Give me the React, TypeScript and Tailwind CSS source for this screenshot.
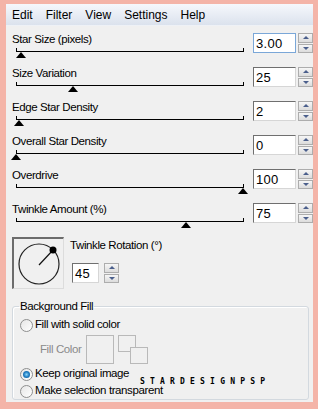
import React from 'react';

type SliderRow = { label: string; value: string; pos: number; focused?: boolean };

const rows: SliderRow[] = [
  { label: 'Star Size (pixels)', value: '3.00', pos: 5, focused: true },
  { label: 'Size Variation', value: '25', pos: 57 },
  { label: 'Edge Star Density', value: '2', pos: 3 },
  { label: 'Overall Star Density', value: '0', pos: 0 },
  { label: 'Overdrive', value: '100', pos: 227 },
  { label: 'Twinkle Amount (%)', value: '75', pos: 170 },
];

const menu = ['Edit', 'Filter', 'View', 'Settings', 'Help'];

const Spinner = () => (
  <div className="flex flex-col w-[15px] h-[20px] gap-px">
    <div className="flex-1 border border-[#adadad] bg-linear-to-b from-[#f6f6f6] to-[#dcdcdc] flex items-center justify-center">
      <div className="w-0 h-0 border-x-[3px] border-x-transparent border-b-[3px] border-b-[#4b5f8c]" />
    </div>
    <div className="flex-1 border border-[#adadad] bg-linear-to-b from-[#f6f6f6] to-[#dcdcdc] flex items-center justify-center">
      <div className="w-0 h-0 border-x-[3px] border-x-transparent border-t-[3px] border-t-[#4b5f8c]" />
    </div>
  </div>
);

const NumberBox = ({ value, width, focused }: { value: string; width: string; focused?: boolean }) => (
  <div
    className={`${width} h-[20px] bg-white flex items-center pl-[2px] text-[13px] tracking-[0.3px] leading-none text-black ${
      focused
        ? 'border border-[#7aa7d8]'
        : 'border-t border-l border-[#6f6f6f] border-r-[#d6d6d6] border-b-[#d6d6d6] border-r border-b'
    }`}
  >
    {value}
  </div>
);

const Radio = ({ checked }: { checked?: boolean }) => (
  <div className="w-[13px] h-[13px] rounded-full border border-[#8e8f8f] bg-linear-to-br from-[#e6e6e6] to-[#ffffff] flex items-center justify-center">
    {checked && (
      <div className="w-[7px] h-[7px] rounded-full bg-radial from-[#8ad7f7] via-[#1f7fc4] to-[#0b4f8a]" />
    )}
  </div>
);

export default function App() {
  return (
    <div
      className="relative w-[318px] h-[409px] bg-[#f4b4a8] pt-[4px] pl-[6px] pr-[5px] pb-[7px] text-[11.5px] tracking-[-0.4px] text-black"
      style={{ fontFamily: '"Liberation Sans", Arial, sans-serif' }}
    >
      <div className="h-full bg-[#f0f0f0] flex flex-col">
        {/* menu bar */}
        <div className="h-[22px] bg-linear-to-b from-[#f6f8fc] to-[#dbe2ed] border-b border-[#eef1f6] flex items-center pl-[6px] gap-[13px] text-[12px] tracking-normal">
          {menu.map((m) => (
            <span key={m}>{m}</span>
          ))}
        </div>

        {/* sliders */}
        <div className="pt-[7px] flex flex-col">
          {rows.map((r) => (
            <div key={r.label} className="h-[34px] flex">
              <div className="w-[243px] pl-[6px]">
                <div className="leading-[12px]">{r.label}</div>
                <div className="relative ml-[4px] w-[228px] mt-[3px] h-[11px]">
                  <div className="h-[4px] border-l border-r border-b border-black" />
                  <div
                    className="absolute top-[4px] w-0 h-0 border-x-[5px] border-x-transparent border-b-[6px] border-b-black"
                    style={{ left: r.pos - 5 }}
                  />
                </div>
              </div>
              <div className="ml-[6px] flex gap-[2px]">
                <NumberBox value={r.value} width="w-[43px]" focused={r.focused} />
                <Spinner />
              </div>
            </div>
          ))}
        </div>

        {/* rotation */}
        <div className="flex pl-[6px]">
          <div className="w-[52px] h-[52px] border-t-2 border-l-2 border-[#6c6c6c] border-r border-b border-r-[#dcdcdc] border-b-[#dcdcdc]">
            <svg width="49" height="49" viewBox="0 0 49 49">
              <circle cx="25" cy="25" r="20" fill="none" stroke="#222" strokeWidth="1.2" />
              <line x1="25" y1="26" x2="39" y2="11" stroke="#111" strokeWidth="1.2" />
              <circle cx="39" cy="11" r="3.5" fill="#000" />
            </svg>
          </div>
          <div className="ml-[6px] pt-[2px]">
            <div className="leading-[12px]">Twinkle Rotation (°)</div>
            <div className="flex gap-[5px] ml-[2px] mt-[12px]">
              <NumberBox value="45" width="w-[27px]" />
              <Spinner />
            </div>
          </div>
        </div>

        {/* background fill */}
        <fieldset className="mt-[10px] ml-[6px] mr-[4px] border border-[#d3d9df] rounded-[3px] pl-[7px] pb-0 shadow-[inset_1px_1px_0_#ffffff]">
          <legend className="px-px -ml-px leading-[14px]">Background Fill</legend>
          <div className="mt-[4px] h-[16px] flex items-center gap-[2px]">
            <Radio />
            <span>Fill with solid color</span>
          </div>
          <div className="mt-[2px] h-[29px] flex items-center pl-[20px]">
            <span className="text-[#8a8a8a] w-[46px]">Fill Color</span>
            <div className="w-[28px] h-[29px] border border-[#b9b9b9]" />
            <div className="relative ml-[4px] w-[30px] h-[29px]">
              <div className="absolute left-0 top-0 w-[18px] h-[17px] border border-[#b9b9b9]" />
              <div className="absolute left-[12px] top-[12px] w-[18px] h-[17px] border border-[#b9b9b9] bg-[#f0f0f0]" />
            </div>
          </div>
          <div className="mt-[2px] h-[16px] flex items-center gap-[2px]">
            <Radio checked />
            <span>Keep original image</span>
          </div>
          <div className="mt-px h-[16px] flex items-center gap-[2px]">
            <Radio />
            <span>Make selection transparent</span>
          </div>
        </fieldset>
      </div>

      {/* watermark */}
      <div
        className="absolute left-[140px] top-[378px] text-[8px] font-bold leading-[8px] tracking-[5.2px] text-black"
        style={{ fontFamily: '"DejaVu Sans Mono", monospace' }}
      >
        STARDESIGNPSP
      </div>
    </div>
  );
}
